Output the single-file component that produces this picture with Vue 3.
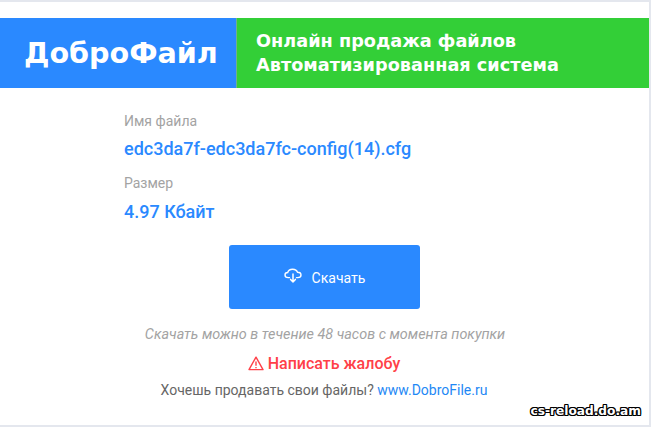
<template>
  <div class="page">
    <div class="card">
      <header class="banner">
        <div class="logo">ДоброФайл</div>
        <div class="slogan">
          <div>Онлайн продажа файлов</div>
          <div>Автоматизированная система</div>
        </div>
      </header>

      <div class="info">
        <div class="label">Имя файла</div>
        <div class="value">{{ file.name }}</div>
        <div class="label size-label">Размер</div>
        <div class="value size-value">{{ file.size }}</div>
      </div>

      <div class="actions">
        <a class="download" href="#">
          <svg class="cloud" viewBox="0 0 18 16" width="18" height="16" fill="none" stroke="#fff" stroke-width="1.4" stroke-linecap="round" stroke-linejoin="round">
            <path d="M5.5 9.6H4.2C2.3 9.6 1 8.6 1 7C1 5.5 2.2 4.5 3.7 4.5C4.2 2.5 6.1 1.2 8.6 1.2C11 1.2 12.9 2.4 13.5 4.3C15.4 4.3 17 5.4 17 7C17 8.6 15.6 9.6 13.8 9.6H12.5" />
            <path d="M9 6V14M6.6 11.4L9 14L11.4 11.4" stroke-width="1.5" />
          </svg>
          <span>Скачать</span>
        </a>
        <p class="note">Скачать можно в течение 48 часов с момента покупки</p>
        <a class="complaint" href="#">
          <svg class="warn" viewBox="0 0 16 15" width="16" height="15" fill="none" stroke="#ff4048" stroke-width="1.4" stroke-linejoin="round">
            <path d="M8 1.2L15 13.6H1Z" />
            <path d="M8 5.4V9.8M8 10.9V12.2" />
          </svg>
          <span>Написать жалобу</span>
        </a>
        <p class="sell">Хочешь продавать свои файлы? <a href="#">www.DobroFile.ru</a></p>
      </div>
    </div>
    <div class="watermark">cs-reload.do.am</div>
  </div>
</template>

<script setup>
const file = {
  name: 'edc3da7f-edc3da7fc-config(14).cfg',
  size: '4.97 Кбайт'
}
</script>

<style scoped>
.page {
  position: relative;
  width: 651px;
  height: 427px;
  overflow: hidden;
  background: #e4e7ee;
  padding: 2px 2px 2px 0;
  box-sizing: border-box;
  font-family: Roboto, sans-serif;
}

.card {
  height: 100%;
  background: #fff;
  padding-top: 16px;
  box-sizing: border-box;
}

.banner {
  display: flex;
  height: 70px;
  color: #fff;
  font-family: "DejaVu Sans", sans-serif;
  font-weight: 700;
}

.logo {
  width: 237px;
  background: #2a89ff;
  font-size: 28.6px;
  line-height: 70px;
  padding-left: 24px;
  box-sizing: border-box;
  border-right: 1px solid #6fb08f;
}

.slogan {
  flex: 1;
  background: #33cf37;
  font-size: 17.7px;
  line-height: 24px;
  padding: 11px 0 0 19px;
}

.info {
  padding: 23px 0 0 124px;
}

.label {
  font-size: 14px;
  line-height: 20px;
  color: #a3a3a3;
}

.size-label {
  margin-top: 14px;
}

.value {
  font-size: 18px;
  line-height: 20px;
  font-weight: 500;
  color: #2a89ff;
  margin-top: 8px;
}

.size-value {
  margin-top: 9px;
}

.actions {
  display: flex;
  flex-direction: column;
  align-items: center;
  padding-right: 1px;
}

.download {
  display: flex;
  align-items: center;
  justify-content: center;
  gap: 10px;
  width: 191px;
  height: 64px;
  padding: 2px 0 0 1px;
  box-sizing: border-box;
  margin-top: 23px;
  border-radius: 3px;
  background: #2a89ff;
  color: #fff;
  font-size: 14px;
  text-decoration: none;
}

.cloud {
  margin-bottom: 4px;
}

.note {
  margin: 17px 0 0;
  padding-left: 2px;
  font-size: 14.4px;
  line-height: 18px;
  font-style: italic;
  color: #a3a3a3;
}

.complaint {
  display: flex;
  align-items: center;
  gap: 4px;
  margin-top: 9px;
  font-size: 16px;
  line-height: 22px;
  font-weight: 500;
  color: #ff4048;
  text-decoration: none;
}

.warn {
  margin-bottom: 2px;
}

.sell {
  margin: 6px 0 0;
  font-size: 14px;
  line-height: 18px;
  color: #666;
}

.sell a {
  color: #1e88f5;
  text-decoration: none;
}

.watermark {
  position: absolute;
  right: 10px;
  top: 404px;
  font-family: "DejaVu Sans", sans-serif;
  font-weight: 700;
  font-size: 12.2px;
  line-height: 14px;
  color: #fff;
  text-shadow: 1px 0 0 #000, -1px 0 0 #000, 0 1px 0 #000, 0 -1px 0 #000, 1px 1px 0 #000, -1px -1px 0 #000, 1px -1px 0 #000, -1px 1px 0 #000;
}
</style>
